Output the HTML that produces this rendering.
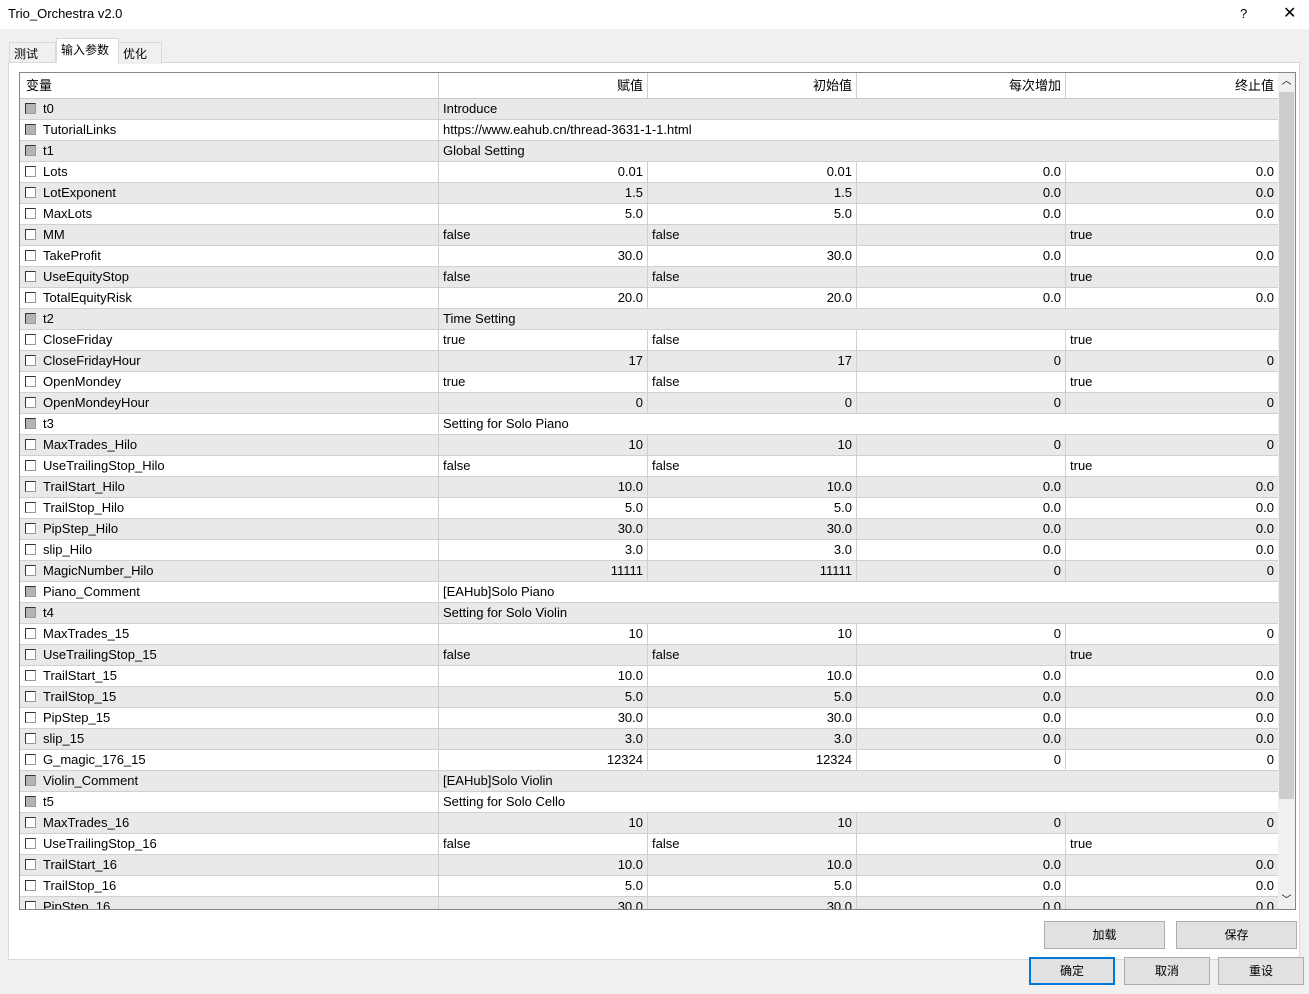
<!DOCTYPE html>
<html><head><meta charset="utf-8"><style>
*{box-sizing:border-box;margin:0;padding:0}
body{width:1309px;height:994px;background:#f0f0f0;font-family:"Liberation Sans","Noto Sans CJK SC",sans-serif;font-size:13px;color:#000;position:relative;overflow:hidden}
.title{position:absolute;left:0;top:0;width:1309px;height:29px;background:#fff}
.title span{position:absolute;left:8px;top:6px;font-size:13px}
.tab{position:absolute;top:41px;height:22px;border:1px solid #d9d9d9;border-bottom:none;background:#f0f0f0;padding:2px 4px;font-size:12px}
.panel{position:absolute;left:8px;top:62px;width:1292px;height:898px;background:#fff;border:1px solid #d9d9d9}
.grid{position:absolute;left:19px;top:72px;width:1277px;height:838px;border:1px solid #828790;background:#fff;overflow:hidden}
.row{position:absolute;left:0;height:21px;width:1258px;border-bottom:1px solid #d0d0d0}
.g{background:#e9e9e9}
.c{position:absolute;top:0;height:20px;line-height:20px;border-right:1px solid #d0d0d0;white-space:nowrap;overflow:hidden;padding:0 4px}
.c0{left:0;width:419px;padding-left:23px}
.c1{left:419px;width:209px}.c2{left:628px;width:209px}.c3{left:837px;width:209px}.c4{left:1046px;width:212px;border-right:none}
.r{text-align:right}
.c.w{width:839px;border-right:none}
.cb{position:absolute;left:5px;top:4px;width:11px;height:11px;border:1px solid #333;border-right-color:#999;border-bottom-color:#999;background:#fff}
.cb.f{background:#b4b4b4}
.hdr{position:absolute;left:0;top:0;height:26px;width:1258px;border-bottom:1px solid #c8c8c8;background:#fff}
.hdr .c{height:25px;line-height:25px;padding-left:6px}
.sb{position:absolute;left:1258px;top:0;width:17px;height:836px;background:#f0f0f0}
.thumb{position:absolute;left:1px;top:19px;width:15px;height:707px;background:#cdcdcd}
.btn{position:absolute;height:28px;border:1px solid #adadad;background:#e1e1e1;text-align:center;line-height:26px;font-size:12px}
</style></head><body>
<div class="title"><span>Trio_Orchestra v2.0</span><span style="left:1240px">?</span><span style="left:1283px;font-size:16px;top:3px">✕</span></div>
<div class="tab" style="left:9px;width:47px;top:42px">测试</div>
<div class="panel"></div>
<div class="tab" style="left:56px;width:63px;top:38px;height:25px;background:#fff;z-index:2;border-color:#d9d9d9">输入参数</div>
<div class="tab" style="left:118px;width:44px;top:42px">优化</div>
<div class="grid">
<div class="hdr"><div class="c c0" style="padding-left:6px">变量</div><div class="c c1 r">赋值</div><div class="c c2 r">初始值</div><div class="c c3 r">每次增加</div><div class="c c4 r">终止值</div></div>
<div class="sb"><div style="text-align:center;font-size:10px;line-height:17px">︿</div><div class="thumb"></div><div style="position:absolute;top:818px;width:17px;text-align:center;font-size:10px">﹀</div></div>

<div class="row g" style="top:26px"><div class="cb f"></div><div class="c c0">t0</div><div class="c c1 w">Introduce</div></div>
<div class="row" style="top:47px"><div class="cb f"></div><div class="c c0">TutorialLinks</div><div class="c c1 w">https://www.eahub.cn/thread-3631-1-1.html</div></div>
<div class="row g" style="top:68px"><div class="cb f"></div><div class="c c0">t1</div><div class="c c1 w">Global Setting</div></div>
<div class="row" style="top:89px"><div class="cb"></div><div class="c c0">Lots</div><div class="c c1 r">0.01</div><div class="c c2 r">0.01</div><div class="c c3 r">0.0</div><div class="c c4 r">0.0</div></div>
<div class="row g" style="top:110px"><div class="cb"></div><div class="c c0">LotExponent</div><div class="c c1 r">1.5</div><div class="c c2 r">1.5</div><div class="c c3 r">0.0</div><div class="c c4 r">0.0</div></div>
<div class="row" style="top:131px"><div class="cb"></div><div class="c c0">MaxLots</div><div class="c c1 r">5.0</div><div class="c c2 r">5.0</div><div class="c c3 r">0.0</div><div class="c c4 r">0.0</div></div>
<div class="row g" style="top:152px"><div class="cb"></div><div class="c c0">MM</div><div class="c c1">false</div><div class="c c2">false</div><div class="c c3"></div><div class="c c4">true</div></div>
<div class="row" style="top:173px"><div class="cb"></div><div class="c c0">TakeProfit</div><div class="c c1 r">30.0</div><div class="c c2 r">30.0</div><div class="c c3 r">0.0</div><div class="c c4 r">0.0</div></div>
<div class="row g" style="top:194px"><div class="cb"></div><div class="c c0">UseEquityStop</div><div class="c c1">false</div><div class="c c2">false</div><div class="c c3"></div><div class="c c4">true</div></div>
<div class="row" style="top:215px"><div class="cb"></div><div class="c c0">TotalEquityRisk</div><div class="c c1 r">20.0</div><div class="c c2 r">20.0</div><div class="c c3 r">0.0</div><div class="c c4 r">0.0</div></div>
<div class="row g" style="top:236px"><div class="cb f"></div><div class="c c0">t2</div><div class="c c1 w">Time Setting</div></div>
<div class="row" style="top:257px"><div class="cb"></div><div class="c c0">CloseFriday</div><div class="c c1">true</div><div class="c c2">false</div><div class="c c3"></div><div class="c c4">true</div></div>
<div class="row g" style="top:278px"><div class="cb"></div><div class="c c0">CloseFridayHour</div><div class="c c1 r">17</div><div class="c c2 r">17</div><div class="c c3 r">0</div><div class="c c4 r">0</div></div>
<div class="row" style="top:299px"><div class="cb"></div><div class="c c0">OpenMondey</div><div class="c c1">true</div><div class="c c2">false</div><div class="c c3"></div><div class="c c4">true</div></div>
<div class="row g" style="top:320px"><div class="cb"></div><div class="c c0">OpenMondeyHour</div><div class="c c1 r">0</div><div class="c c2 r">0</div><div class="c c3 r">0</div><div class="c c4 r">0</div></div>
<div class="row" style="top:341px"><div class="cb f"></div><div class="c c0">t3</div><div class="c c1 w">Setting for Solo Piano</div></div>
<div class="row g" style="top:362px"><div class="cb"></div><div class="c c0">MaxTrades_Hilo</div><div class="c c1 r">10</div><div class="c c2 r">10</div><div class="c c3 r">0</div><div class="c c4 r">0</div></div>
<div class="row" style="top:383px"><div class="cb"></div><div class="c c0">UseTrailingStop_Hilo</div><div class="c c1">false</div><div class="c c2">false</div><div class="c c3"></div><div class="c c4">true</div></div>
<div class="row g" style="top:404px"><div class="cb"></div><div class="c c0">TrailStart_Hilo</div><div class="c c1 r">10.0</div><div class="c c2 r">10.0</div><div class="c c3 r">0.0</div><div class="c c4 r">0.0</div></div>
<div class="row" style="top:425px"><div class="cb"></div><div class="c c0">TrailStop_Hilo</div><div class="c c1 r">5.0</div><div class="c c2 r">5.0</div><div class="c c3 r">0.0</div><div class="c c4 r">0.0</div></div>
<div class="row g" style="top:446px"><div class="cb"></div><div class="c c0">PipStep_Hilo</div><div class="c c1 r">30.0</div><div class="c c2 r">30.0</div><div class="c c3 r">0.0</div><div class="c c4 r">0.0</div></div>
<div class="row" style="top:467px"><div class="cb"></div><div class="c c0">slip_Hilo</div><div class="c c1 r">3.0</div><div class="c c2 r">3.0</div><div class="c c3 r">0.0</div><div class="c c4 r">0.0</div></div>
<div class="row g" style="top:488px"><div class="cb"></div><div class="c c0">MagicNumber_Hilo</div><div class="c c1 r">11111</div><div class="c c2 r">11111</div><div class="c c3 r">0</div><div class="c c4 r">0</div></div>
<div class="row" style="top:509px"><div class="cb f"></div><div class="c c0">Piano_Comment</div><div class="c c1 w">[EAHub]Solo Piano</div></div>
<div class="row g" style="top:530px"><div class="cb f"></div><div class="c c0">t4</div><div class="c c1 w">Setting for Solo Violin</div></div>
<div class="row" style="top:551px"><div class="cb"></div><div class="c c0">MaxTrades_15</div><div class="c c1 r">10</div><div class="c c2 r">10</div><div class="c c3 r">0</div><div class="c c4 r">0</div></div>
<div class="row g" style="top:572px"><div class="cb"></div><div class="c c0">UseTrailingStop_15</div><div class="c c1">false</div><div class="c c2">false</div><div class="c c3"></div><div class="c c4">true</div></div>
<div class="row" style="top:593px"><div class="cb"></div><div class="c c0">TrailStart_15</div><div class="c c1 r">10.0</div><div class="c c2 r">10.0</div><div class="c c3 r">0.0</div><div class="c c4 r">0.0</div></div>
<div class="row g" style="top:614px"><div class="cb"></div><div class="c c0">TrailStop_15</div><div class="c c1 r">5.0</div><div class="c c2 r">5.0</div><div class="c c3 r">0.0</div><div class="c c4 r">0.0</div></div>
<div class="row" style="top:635px"><div class="cb"></div><div class="c c0">PipStep_15</div><div class="c c1 r">30.0</div><div class="c c2 r">30.0</div><div class="c c3 r">0.0</div><div class="c c4 r">0.0</div></div>
<div class="row g" style="top:656px"><div class="cb"></div><div class="c c0">slip_15</div><div class="c c1 r">3.0</div><div class="c c2 r">3.0</div><div class="c c3 r">0.0</div><div class="c c4 r">0.0</div></div>
<div class="row" style="top:677px"><div class="cb"></div><div class="c c0">G_magic_176_15</div><div class="c c1 r">12324</div><div class="c c2 r">12324</div><div class="c c3 r">0</div><div class="c c4 r">0</div></div>
<div class="row g" style="top:698px"><div class="cb f"></div><div class="c c0">Violin_Comment</div><div class="c c1 w">[EAHub]Solo Violin</div></div>
<div class="row" style="top:719px"><div class="cb f"></div><div class="c c0">t5</div><div class="c c1 w">Setting for Solo Cello</div></div>
<div class="row g" style="top:740px"><div class="cb"></div><div class="c c0">MaxTrades_16</div><div class="c c1 r">10</div><div class="c c2 r">10</div><div class="c c3 r">0</div><div class="c c4 r">0</div></div>
<div class="row" style="top:761px"><div class="cb"></div><div class="c c0">UseTrailingStop_16</div><div class="c c1">false</div><div class="c c2">false</div><div class="c c3"></div><div class="c c4">true</div></div>
<div class="row g" style="top:782px"><div class="cb"></div><div class="c c0">TrailStart_16</div><div class="c c1 r">10.0</div><div class="c c2 r">10.0</div><div class="c c3 r">0.0</div><div class="c c4 r">0.0</div></div>
<div class="row" style="top:803px"><div class="cb"></div><div class="c c0">TrailStop_16</div><div class="c c1 r">5.0</div><div class="c c2 r">5.0</div><div class="c c3 r">0.0</div><div class="c c4 r">0.0</div></div>
<div class="row g" style="top:824px"><div class="cb"></div><div class="c c0">PipStep_16</div><div class="c c1 r">30.0</div><div class="c c2 r">30.0</div><div class="c c3 r">0.0</div><div class="c c4 r">0.0</div></div>
</div>
<div class="btn" style="left:1044px;top:921px;width:121px">加载</div>
<div class="btn" style="left:1176px;top:921px;width:121px">保存</div>
<div class="btn" style="left:1029px;top:957px;width:86px;border:2px solid #0078d7;line-height:24px">确定</div>
<div class="btn" style="left:1124px;top:957px;width:86px">取消</div>
<div class="btn" style="left:1218px;top:957px;width:86px">重设</div>
</body></html>
